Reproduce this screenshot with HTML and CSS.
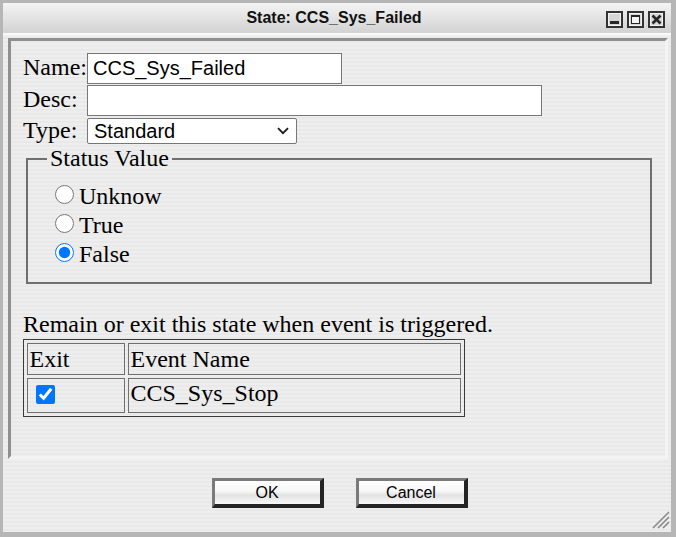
FILE: index.html
```html
<!DOCTYPE html>
<html>
<head>
<meta charset="utf-8">
<title>State: CCS_Sys_Failed</title>
<link rel="stylesheet" href="styles.css">
</head>
<body>
<div class="window">
  <div class="titlebar">
    <div class="title">State: CCS_Sys_Failed</div>
    <div class="controls">
      <svg class="ctl" width="17" height="17" viewBox="0 0 17 17"><rect x="1" y="1" width="15" height="15" fill="#d6d6d6" stroke="#333" stroke-width="2"/><rect x="2.5" y="2.5" width="12" height="12" fill="none" stroke="#f2f2f2" stroke-width="1"/><rect x="4" y="10" width="9" height="3" fill="#262626"/></svg>
      <svg class="ctl" width="17" height="17" viewBox="0 0 17 17"><rect x="1" y="1" width="15" height="15" fill="#d6d6d6" stroke="#333" stroke-width="2"/><rect x="2.5" y="2.5" width="12" height="12" fill="none" stroke="#f2f2f2" stroke-width="1"/><rect x="4.5" y="4.5" width="8" height="8" fill="#f4f4f4" stroke="#262626" stroke-width="1"/><rect x="4" y="4" width="9" height="2" fill="#262626"/></svg>
      <svg class="ctl" width="17" height="17" viewBox="0 0 17 17"><rect x="1" y="1" width="15" height="15" fill="#d6d6d6" stroke="#333" stroke-width="2"/><rect x="2.5" y="2.5" width="12" height="12" fill="none" stroke="#f2f2f2" stroke-width="1"/><path d="M4.5 4.5 L12.5 12.5 M12.5 4.5 L4.5 12.5" stroke="#262626" stroke-width="2.6" fill="none"/></svg>
    </div>
  </div>
  <div class="client">
    <div class="frame">
      <div class="fields">
        <label class="lbl" for="f-name">Name:</label>
        <input class="txt name" id="f-name" type="text" value="CCS_Sys_Failed">
        <label class="lbl" for="f-desc">Desc:</label>
        <input class="txt desc" id="f-desc" type="text" value="">
        <label class="lbl" for="f-type">Type:</label>
        <div class="select-wrap">
          <select class="sel" id="f-type"><option>Standard</option></select>
          <svg class="chev" width="12" height="8" viewBox="0 0 12 8"><path d="M1 1.2 L6 6.2 L11 1.2" fill="none" stroke="#1a1a1a" stroke-width="1.8"/></svg>
        </div>
      </div>
      <fieldset class="status">
        <legend>Status Value</legend>
        <label class="opt"><input type="radio" name="sv">Unknow</label>
        <label class="opt"><input type="radio" name="sv">True</label>
        <label class="opt"><input type="radio" name="sv" checked>False</label>
      </fieldset>
      <p class="hint">Remain or exit this state when event is triggered.</p>
      <table class="events">
        <tr class="head"><td class="c1">Exit</td><td class="c2">Event Name</td></tr>
        <tr class="row"><td class="c1"><input type="checkbox" checked></td><td class="c2">CCS_Sys_Stop</td></tr>
      </table>
    </div>
    <div class="actions">
      <button class="btn" type="button">OK</button>
      <button class="btn" type="button">Cancel</button>
    </div>
  </div>
  <svg class="grip" width="18" height="18" viewBox="0 0 18 18"><path d="M1 17 L17 1 M6 17 L17 6 M11 17 L17 11" stroke="#8a8a8a" stroke-width="1.6" fill="none"/></svg>
</div>
</body>
</html>
```
FILE: styles.css
```css
* { box-sizing: border-box; }
html, body { margin: 0; padding: 0; }
body {
  width: 676px;
  height: 537px;
  overflow: hidden;
  background: #b6b6b6;
  font-family: "Liberation Serif", "Times New Roman", serif;
  color: #000;
}
.window {
  position: relative;
  width: 676px;
  height: 537px;
  border-style: solid;
  border-color: #b6b6b6;
  border-width: 3px 5px 5px 3px;
  background: repeating-linear-gradient(to bottom, #eeeeee 0 2px, #e9e9e9 2px 4px);
  display: flex;
  flex-direction: column;
}
.titlebar {
  flex: none;
  height: 32px;
  display: grid;
  grid-template-columns: 1fr auto 1fr;
  align-items: center;
  background: linear-gradient(#f4f4f4, #d2d2d2);
  border-bottom: 2px solid #f8f8f8;
  padding: 0 6px 0 0;
}
.title {
  grid-column: 2;
  font: bold 16px "Liberation Sans", Arial, sans-serif;
  color: #111;
}
.controls {
  grid-column: 3;
  justify-self: end;
  display: flex;
  gap: 4px;
  margin-top: 2px;
}
.ctl { display: block; }
.client {
  flex: 1;
  display: flex;
  flex-direction: column;
  padding: 3px 3px 0 5px;
}
.frame {
  height: 421px;
  border-style: solid;
  border-width: 3px;
  border-color: #8f8f8f #f3f3f3 #f3f3f3 #8f8f8f;
  padding: 12px 10px 0 12px;
}
.fields {
  display: grid;
  grid-template-columns: 64px max-content;
  align-items: baseline;
  justify-items: start;
  row-gap: 1px;
}
.lbl {
  font-size: 24px;
  line-height: normal;
}
.txt {
  font: 20px "Liberation Sans", Arial, sans-serif;
  height: 31px;
  border: 1px solid #767676;
  background: #fff;
  padding: 0 5px;
  margin: 0;
  outline: none;
}
.name { width: 255px; }
.desc { width: 455px; }
.select-wrap {
  position: relative;
  width: 210px;
  height: 26px;
  margin-top: 1px;
}
.sel {
  appearance: none;
  -webkit-appearance: none;
  width: 100%;
  height: 100%;
  margin: 0;
  font: 20px "Liberation Sans", Arial, sans-serif;
  color: #000;
  background: #fff;
  border: 1px solid #767676;
  border-radius: 2px;
  padding: 0 0 0 6px;
}
.chev {
  position: absolute;
  right: 8px;
  top: 9px;
}
.status {
  margin: 1px 3px 0;
  border: 2px solid #707070;
  padding: 10px 19px 13px;
  min-width: 0;
}
.status legend {
  font-size: 24px;
  line-height: normal;
  padding: 0 3px;
}
.opt {
  display: block;
  font-size: 24px;
  line-height: 29px;
}
.opt input {
  width: 19px;
  height: 19px;
  margin: 0 5px 0 8px;
  vertical-align: baseline;
  accent-color: #0075ff;
}
.hint {
  margin: 27px 0 0;
  font-size: 24px;
  line-height: normal;
}
.events {
  margin-top: 1px;
  width: 442px;
  border: 1px solid #3a3a3a;
  border-spacing: 3px;
  font-size: 24px;
}
.events td {
  border: 1px solid #707070;
  padding: 0 1.5px;
}
.events .c1 { width: 98px; }
.head td { height: 32px; vertical-align: middle; }
.row td { height: 35px; vertical-align: top; padding-top: 1px; }
.row .c1 input {
  display: block;
  width: 19px;
  height: 19px;
  margin: 5px 0 0 6.5px;
  accent-color: #0075ff;
}
.actions {
  display: flex;
  justify-content: center;
  gap: 32px;
  padding: 19px 0 0 3px;
}
.btn {
  width: 112px;
  height: 30px;
  margin: 0;
  padding: 0;
  border-style: solid;
  border-width: 3px 4px 4px 3px;
  border-color: #7a7a7a #242424 #242424 #7a7a7a;
  background: linear-gradient(#ffffff 0%, #f7f7f7 45%, #e2e2e2 62%, #ededed 80%, #f8f8f8 100%);
  font: 16px "Liberation Sans", Arial, sans-serif;
  color: #000;
}
.grip {
  position: absolute;
  right: 1px;
  bottom: 3px;
}
```
